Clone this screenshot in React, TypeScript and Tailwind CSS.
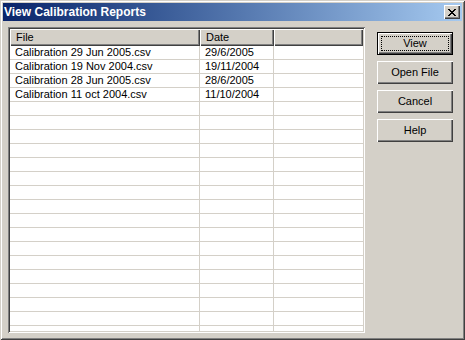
import React from "react";

const files = [
  { name: "Calibration 29 Jun 2005.csv", date: "29/6/2005" },
  { name: "Calibration 19 Nov 2004.csv", date: "19/11/2004" },
  { name: "Calibration 28 Jun 2005.csv", date: "28/6/2005" },
  { name: "Calibration 11 oct 2004.csv", date: "11/10/2004" },
];

const raised =
  "shadow-[inset_1px_1px_0_#ffffff,inset_-1px_-1px_0_#404040,inset_-2px_-2px_0_#808080]";

const headerCell =
  "flex h-full items-center pl-[6px] shadow-[inset_1px_1px_0_#ffffff,inset_-1px_-1px_0_#404040,inset_-2px_-2px_0_#808080]";

function Button({ label, isDefault }: { label: string; isDefault?: boolean }) {
  if (isDefault) {
    return (
      <div className="h-[23px] w-[76px] border border-black bg-[#d4d0c8] p-0">
        <div className={`flex h-full w-full items-center justify-center p-[3px] ${raised}`}>
          <div className="flex h-full w-full items-center justify-center border border-dotted border-black text-[11px] text-black">
            {label}
          </div>
        </div>
      </div>
    );
  }
  return (
    <div
      className={`flex h-[23px] w-[76px] items-center justify-center bg-[#d4d0c8] text-[11px] text-black ${raised}`}
    >
      {label}
    </div>
  );
}

export default function App() {
  const rows = Array.from({ length: 21 }, (_, i) => files[i] ?? null);

  return (
    <div
      className="flex h-[340px] w-[465px] flex-col bg-[#d4d0c8] p-[3px] shadow-[inset_1px_1px_0_#d4d0c8,inset_-1px_-1px_0_#404040,inset_2px_2px_0_#ffffff,inset_-2px_-2px_0_#808080]"
      style={{ fontFamily: '"Liberation Sans", Arial, sans-serif' }}
    >
      {/* title bar */}
      <div className="flex h-[18px] items-center justify-between bg-linear-to-r from-[#0a246a] to-[#a6caf0] pl-[1px] pr-[2px]">
        <span className="text-[12px] font-bold text-white">View Calibration Reports</span>
        <div className={`flex h-[14px] w-[16px] items-center justify-center bg-[#d4d0c8] ${raised}`}>
          <svg width="8" height="7" viewBox="0 0 8 7" shapeRendering="crispEdges">
            <path
              d="M0 0h2v1H0zM6 0h2v1H6zM1 1h2v1H1zM5 1h2v1H5zM2 2h4v1H2zM3 3h2v1H3zM2 4h4v1H2zM1 5h2v1H1zM5 5h2v1H5zM0 6h2v1H0zM6 6h2v1H6z"
              fill="#000"
            />
          </svg>
        </div>
      </div>

      {/* body */}
      <div className="flex flex-1 gap-[12px] pl-[5px] pt-[6px]">
        {/* list view */}
        <div className="h-[306px] w-[357px] bg-white p-[2px] shadow-[inset_1px_1px_0_#808080,inset_-1px_-1px_0_#ffffff,inset_2px_2px_0_#404040,inset_-2px_-2px_0_#d4d0c8]">
          <div className="flex h-full flex-col overflow-hidden">
            <div className="flex h-[17px] shrink-0 bg-[#d4d0c8] text-[11px] text-black">
              <div className={`w-[190px] ${headerCell}`}>File</div>
              <div className={`w-[74px] ${headerCell}`}>Date</div>
              <div className={`flex-1 ${headerCell}`} />
            </div>
            {rows.map((r, i) => (
              <div
                key={i}
                className="flex h-[14px] shrink-0 border-b border-[#d4d0c8] text-[11px] leading-[13px] text-black"
              >
                <div className="w-[190px] border-r border-[#d4d0c8] pl-[5px]">{r?.name}</div>
                <div className="w-[74px] border-r border-[#d4d0c8] pl-[5px]">{r?.date}</div>
                <div className="flex-1" />
              </div>
            ))}
          </div>
        </div>

        {/* buttons */}
        <div className="flex flex-col gap-[6px] pt-[5px]">
          <Button label="View" isDefault />
          <Button label="Open File" />
          <Button label="Cancel" />
          <Button label="Help" />
        </div>
      </div>
    </div>
  );
}
